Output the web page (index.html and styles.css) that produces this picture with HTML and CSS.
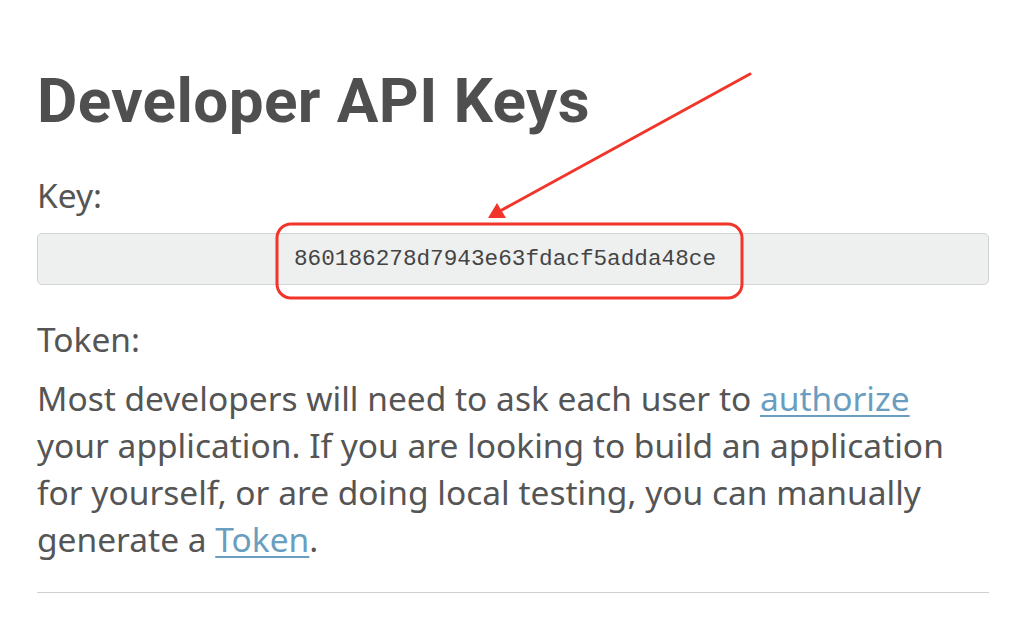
FILE: index.html
```html
<!DOCTYPE html>
<html lang="en">
<head>
    <meta charset="UTF-8">
    <meta name="viewport" content="width=device-width, initial-scale=1.0">
    <title>Developer API Keys</title>
    <link rel="stylesheet" href="styles.css">
</head>
<body>
    <div class="container">
        <h1>Developer API Keys</h1>

        <div class="field key-field">
            <label for="api-key">Key:</label>
            <input type="text" id="api-key" class="key-input" value="860186278d7943e63fdacf5adda48ce" readonly>
        </div>

        <div class="field token-field">
            <label>Token:</label>
            <p class="token-note">
                Most developers will need to ask each user to <a href="#">authorize</a>
                your application. If you are looking to build an application
                for yourself, or are doing local testing, you can manually
                generate a <a href="#">Token</a>.
            </p>
        </div>

        <hr class="divider">
    </div>

    <!-- callout drawn over the key field -->
    <svg class="callout" width="1024" height="623" viewBox="0 0 1024 623">
        <line x1="750" y1="74" x2="500" y2="211" stroke="#f2352b" stroke-width="3" stroke-linecap="round"/>
        <polygon points="488,218 497,203 506,218" fill="#f2352b"/>
        <rect x="277" y="224" width="465" height="74" rx="14" ry="14" fill="none" stroke="#f2352b" stroke-width="3"/>
    </svg>
</body>
</html>
```

FILE: styles.css
```css
body {
    font-family: "Noto Sans", "Open Sans", sans-serif;
    margin: 0;
    padding: 0;
    background-color: #fff;
    color: #555;
}
.container {
    padding: 0 35px 0 37px;
}
h1 {
    font-family: Roboto, "Liberation Sans", sans-serif;
    font-weight: 700;
    font-size: 62px;
    letter-spacing: 0.4px;
    line-height: 72px;
    color: #4f4f4f;
    margin: 65px 0 0;
}
.key-field {
    margin-top: 34px;
}
.token-field {
    margin-top: 30px;
}
label {
    display: block;
    font-size: 33.5px;
    line-height: 48px;
}
.key-input {
    display: block;
    box-sizing: border-box;
    width: 100%;
    height: 52px;
    margin-top: 14px;
    padding: 0 26px 0 10px;
    background-color: #eeefef;
    border: 1px solid #d2d3d4;
    border-radius: 5px;
    font-family: "Liberation Mono", "Courier New", monospace;
    font-size: 22.7px;
    color: #444;
    text-align: center;
    outline: none;
}
.token-note {
    max-width: 920px;
    font-size: 33.5px;
    line-height: 47px;
    margin: 12px 0 0;
}
.token-note a {
    color: #6a9ec0;
    text-decoration: underline;
    text-decoration-thickness: 2px;
    text-underline-offset: 4px;
}
.divider {
    border: none;
    border-top: 1px solid #d0d0d0;
    margin: 29px 0 0;
}
.callout {
    position: absolute;
    top: 0;
    left: 0;
    pointer-events: none;
}
```
